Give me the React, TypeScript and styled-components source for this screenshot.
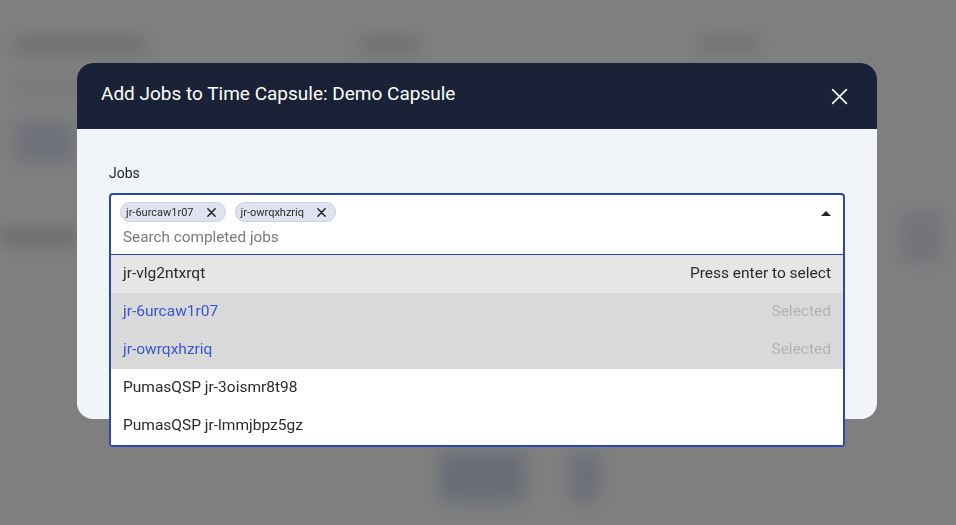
import React from "react";
import styled, { createGlobalStyle } from "styled-components";

const GlobalStyle = createGlobalStyle`
  html, body {
    margin: 0;
    padding: 0;
    width: 956px;
    height: 525px;
    overflow: hidden;
    background: #ffffff;
    font-family: Roboto, "Noto Sans", sans-serif;
  }
`;

// blurred page behind the dialog
const Page = styled.div`
  width: 956px;
  height: 525px;
  filter: blur(9px);
  display: flex;
  flex-direction: column;
  padding: 38px 15px 0;
  box-sizing: border-box;
  gap: 20px;
`;

const StatRow = styled.div`
  display: grid;
  grid-template-columns: 345px 340px 1fr;
`;

const StatCol = styled.div`
  display: flex;
  flex-direction: column;
  gap: 30px;
`;

const Blob = styled.div<{ $w: number; $h?: number; $c?: string }>`
  width: ${(p) => p.$w}px;
  height: ${(p) => p.$h ?? 12}px;
  background: ${(p) => p.$c ?? "#e8e8e8"};
  border-radius: 3px;
`;

const SectionRow = styled.div`
  display: flex;
  justify-content: space-between;
  align-items: center;
  margin-left: -15px;
  margin-top: 30px;
`;

const ChartArea = styled.div`
  display: flex;
  gap: 45px;
  margin: 170px 0 0 425px;
`;

const Overlay = styled.div`
  position: fixed;
  inset: 0;
  background: rgba(0, 0, 0, 0.5);
  display: flex;
  justify-content: center;
  align-items: flex-start;
  padding: 63px 2px 0 0;
`;

const Dialog = styled.div`
  width: 800px;
  border-radius: 16px;
  background: #f1f4f8;
  display: flex;
  flex-direction: column;
`;

const Header = styled.div`
  height: 66px;
  background: #1a2238;
  border-radius: 16px 16px 0 0;
  display: flex;
  align-items: center;
  justify-content: space-between;
  padding: 0 29px 0 24px;
  color: #ffffff;
`;

const Title = styled.h2`
  margin: 0 0 6px;
  font-size: 19px;
  font-weight: 400;
`;

const CloseButton = styled.button`
  background: none;
  border: none;
  padding: 0;
  width: 17px;
  height: 17px;
  display: flex;
  cursor: pointer;
`;

const Body = styled.div`
  padding: 36px 32px 44px;
  height: 290px;
  box-sizing: border-box;
`;

const Label = styled.div`
  font-size: 14px;
  color: #1e1e1e;
  margin-bottom: 12px;
`;

const Combo = styled.div`
  width: 736px;
  border: 2px solid #2b45b5;
  border-radius: 4px;
  background: #ffffff;
  box-sizing: border-box;
`;

const Control = styled.div`
  display: flex;
  align-items: flex-start;
  justify-content: space-between;
  padding: 7px 12px 0 9px;
  height: 59px;
  box-sizing: border-box;
`;

const ValueArea = styled.div`
  display: flex;
  flex-direction: column;
  gap: 6px;
`;

const Chips = styled.div`
  display: flex;
  gap: 9px;
`;

const Chip = styled.span`
  display: inline-flex;
  align-items: center;
  gap: 13px;
  height: 20px;
  padding: 0 9px 0 5px;
  border-radius: 10px;
  background: #dfe3ef;
  border: 1px solid #c9d0e6;
  font-size: 11px;
  color: #2b2b2b;
  box-sizing: border-box;
`;

const Placeholder = styled.div`
  font-size: 15.3px;
  color: #7a7a7a;
  padding-left: 3px;
`;

const Caret = styled.div`
  width: 0;
  height: 0;
  border-left: 5px solid transparent;
  border-right: 5px solid transparent;
  border-bottom: 5px solid #222;
  margin-top: 9px;
`;

const Menu = styled.div`
  border-top: 1px solid #2b45b5;
`;

const Option = styled.div<{ $bg: string; $selected?: boolean }>`
  height: 38px;
  display: flex;
  align-items: center;
  justify-content: space-between;
  padding: 0 12px 2px;
  box-sizing: border-box;
  background: ${(p) => p.$bg};
  font-size: 15.5px;
  color: ${(p) => (p.$selected ? "#3856cf" : "#2a2a2a")};
`;

const Hint = styled.span<{ $muted?: boolean }>`
  color: ${(p) => (p.$muted ? "#b3b3b3" : "#2a2a2a")};
`;

const XIcon = ({ size, color, width }: { size: number; color: string; width: number }) => (
  <svg width={size} height={size} viewBox="0 0 16 16">
    <path d="M1.5 1.5 L14.5 14.5 M14.5 1.5 L1.5 14.5" stroke={color} strokeWidth={width} strokeLinecap="round" />
  </svg>
);

const options = [
  { id: "jr-vlg2ntxrqt", bg: "#e6e6e6", hint: "Press enter to select" },
  { id: "jr-6urcaw1r07", bg: "#d9d9d9", hint: "Selected", selected: true },
  { id: "jr-owrqxhzriq", bg: "#d9d9d9", hint: "Selected", selected: true },
  { id: "PumasQSP jr-3oismr8t98", bg: "#ffffff" },
  { id: "PumasQSP jr-lmmjbpz5gz", bg: "#ffffff" },
];

const App = () => {
  return (
    <>
      <GlobalStyle />
      <Page>
        <StatRow>
          <StatCol>
            <Blob $w={130} $h={14} $c="#d6d6d6" />
            <Blob $w={110} $h={10} />
            <Blob $w={60} $h={40} $c="#dde2f0" />
          </StatCol>
          <StatCol>
            <Blob $w={60} $h={14} $c="#d6d6d6" />
            <Blob $w={140} $h={12} $c="#e2e2e2" />
          </StatCol>
          <StatCol>
            <Blob $w={60} $h={12} $c="#d8d8d8" />
            <Blob $w={110} $h={12} $c="#e0e0e0" />
          </StatCol>
        </StatRow>
        <SectionRow>
          <Blob $w={80} $h={12} $c="#c8c8c8" />
          <Blob $w={40} $h={50} $c="#e2e6f2" />
        </SectionRow>
        <ChartArea>
          <Blob $w={85} $h={50} $c="#cfd8ee" />
          <Blob $w={30} $h={50} $c="#d8def0" />
        </ChartArea>
      </Page>
      <Overlay>
        <Dialog>
          <Header>
            <Title>Add Jobs to Time Capsule: Demo Capsule</Title>
            <CloseButton aria-label="Close">
              <XIcon size={17} color="#ffffff" width={1.5} />
            </CloseButton>
          </Header>
          <Body>
            <Label>Jobs</Label>
            <Combo>
              <Control>
                <ValueArea>
                  <Chips>
                    <Chip>
                      jr-6urcaw1r07
                      <XIcon size={9} color="#222" width={2.6} />
                    </Chip>
                    <Chip>
                      jr-owrqxhzriq
                      <XIcon size={9} color="#222" width={2.6} />
                    </Chip>
                  </Chips>
                  <Placeholder>Search completed jobs</Placeholder>
                </ValueArea>
                <Caret />
              </Control>
              <Menu>
                {options.map((o) => (
                  <Option key={o.id} $bg={o.bg} $selected={o.selected}>
                    <span>{o.id}</span>
                    {o.hint && <Hint $muted={o.selected}>{o.hint}</Hint>}
                  </Option>
                ))}
              </Menu>
            </Combo>
          </Body>
        </Dialog>
      </Overlay>
    </>
  );
};

export default App;
